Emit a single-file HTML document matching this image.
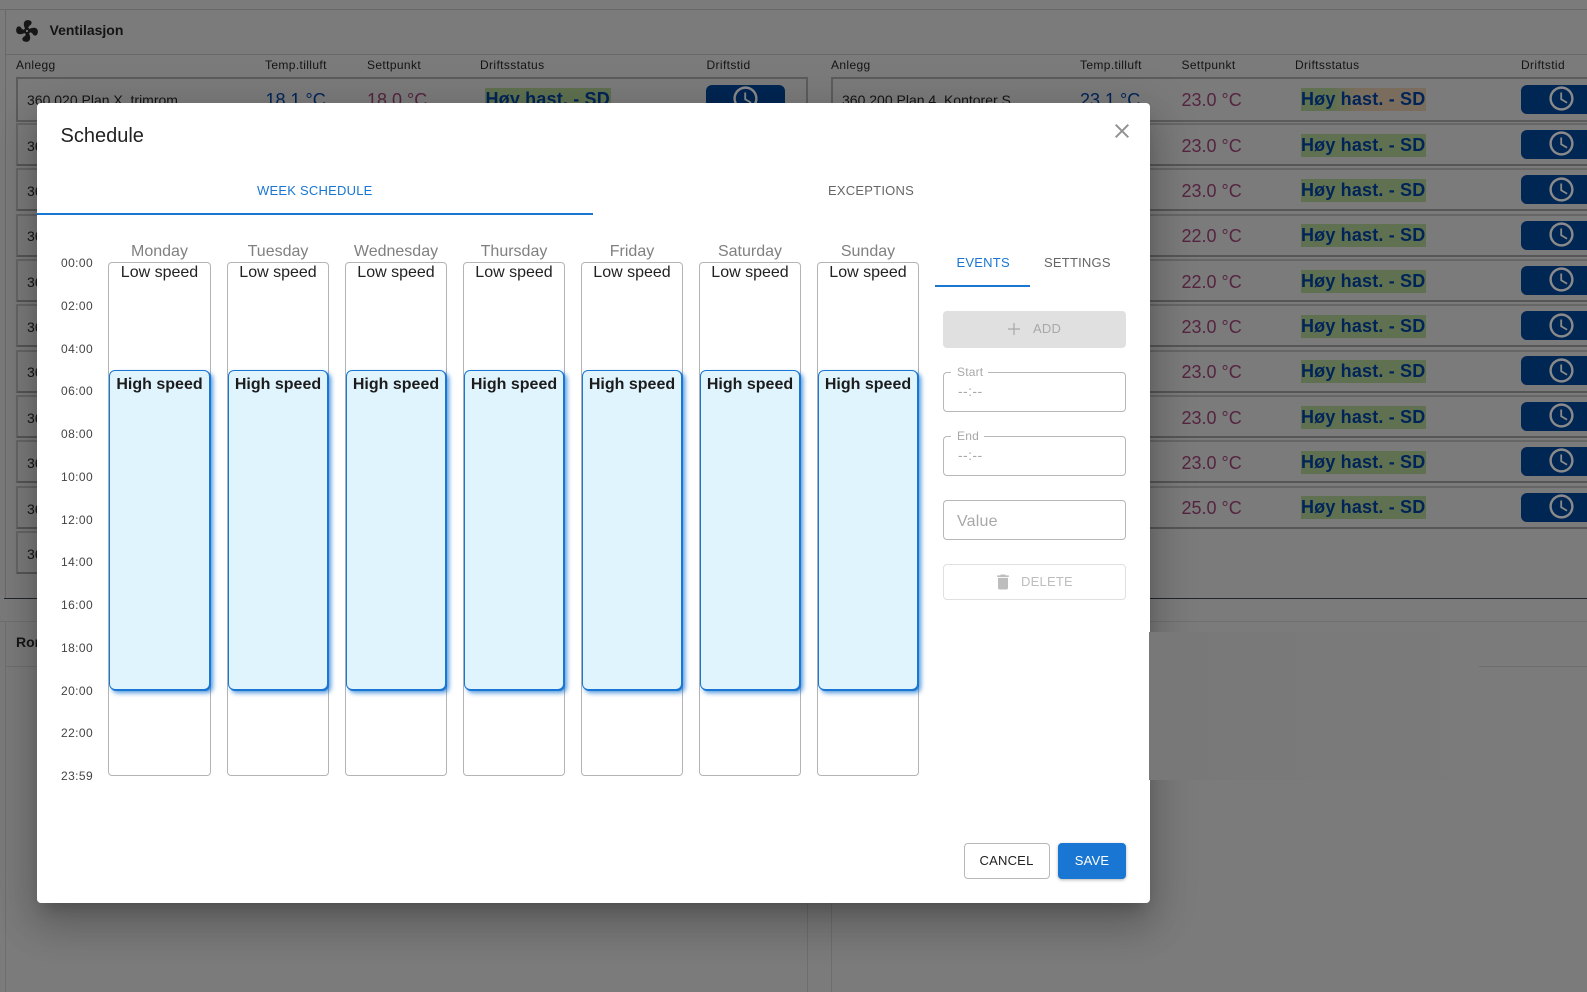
<!DOCTYPE html>
<html><head><meta charset="utf-8"><style>
html,body{margin:0;padding:0;width:1587px;height:992px;overflow:hidden;background:#7b7b7b}
body{position:relative;font-family:"Liberation Sans",sans-serif}
div,span,svg{position:absolute;box-sizing:border-box}
.t{white-space:nowrap;line-height:20px;height:20px}
.ln{background:#696969}
.h{font-size:12px;color:#141414;top:55px;letter-spacing:.37px}
.row{height:43px;border:2px solid #666;border-bottom-color:#565656;background:#7b7b7b}
.nm{font-size:14px;color:#141414}
.tb{font-size:18px;color:#002458}
.tr{font-size:18px;color:#552540}
.bd{height:23px;width:125.5px;background:#5f7150;font-size:18px;font-weight:bold;color:#002458;line-height:23px;white-space:nowrap;letter-spacing:.17px;padding-left:.5px}
.bn{height:29px;background:#002653;border-radius:6px}
.dlg{left:37px;top:103px;width:1113px;height:800px;background:#fff;border-radius:4px;box-shadow:0 11px 15px -7px rgba(0,0,0,.2),0 24px 38px 3px rgba(0,0,0,.14),0 9px 46px 8px rgba(0,0,0,.12)}
.dn{font-size:16px;color:#808080;top:242px;width:102px;text-align:center}
.col{top:262px;width:102px;height:514px;border:1px solid #b4b4b4;border-radius:4px;background:#fff}
.lo{font-size:16px;color:#222;top:263px;width:102px;text-align:center}
.ev{top:370px;width:100px;height:320px;background:#e0f4fe;border:1px solid #1976d2;border-radius:6px;box-shadow:1px 1px 0 #1976d2,3px 3px 5px rgba(25,118,210,.75)}
.hi{font-size:16px;font-weight:bold;color:#1c1c1c;top:375px;width:102px;text-align:center}
.tm{font-size:12px;color:#444;left:61px;letter-spacing:.4px}
.inp{left:943px;width:183px;height:40px;border:1px solid #b8b8b8;border-radius:4px;background:#fff}
.lb{font-size:12px;color:#a8a8a8;left:951px;background:#fff;padding:0 5px 0 6px;line-height:14px;height:14px;letter-spacing:.2px}
.ph{font-size:14px;color:#a8a8a8;left:958px;letter-spacing:.4px}
.up{font-size:13px;letter-spacing:.22px}
</style></head><body>

<div class="ln" style="left:0;top:9px;width:1587px;height:1px"></div>
<div class="ln" style="left:5px;top:10px;width:1px;height:588px"></div>
<div class="ln" style="left:5px;top:54px;width:1582px;height:1px"></div>
<svg style="left:14px;top:18px" width="26" height="26" viewBox="0 0 24 24"><path fill="#161616" d="M12,11A1,1 0 0,0 11,12A1,1 0 0,0 12,13A1,1 0 0,0 13,12A1,1 0 0,0 12,11M12.5,2C17,2 17.11,5.57 14.75,6.75C13.76,7.24 13.32,8.29 13.13,9.22C13.61,9.42 14.03,9.73 14.35,10.13C18.05,8.13 22.03,8.92 22.03,12.5C22.03,17 18.46,17.1 17.28,14.73C16.78,13.74 15.72,13.3 14.79,13.11C14.59,13.59 14.28,14 13.88,14.34C15.87,18.03 15.08,22 11.5,22C7,22 6.91,18.42 9.27,17.24C10.25,16.75 10.69,15.71 10.89,14.79C10.4,14.59 9.97,14.27 9.65,13.87C5.96,15.85 2,15.07 2,11.5C2,7 5.56,6.89 6.74,9.26C7.24,10.25 8.29,10.68 9.22,10.87C9.41,10.39 9.73,9.97 10.14,9.65C8.15,5.96 8.94,2 12.5,2Z"/></svg>
<div class="t" style="left:49.500px;top:20px;font-size:14px;font-weight:bold;color:#141414">Ventilasjon</div>

<div class="t h" style="left:16px">Anlegg</div>
<div class="t h" style="left:265px">Temp.tilluft</div>
<div class="t h" style="left:367px">Settpunkt</div>
<div class="t h" style="left:480px">Driftsstatus</div>
<div class="t h" style="left:706.5px">Driftstid</div>
<div class="t h" style="left:831px">Anlegg</div>
<div class="t h" style="left:1080px">Temp.tilluft</div>
<div class="t h" style="left:1181.5px">Settpunkt</div>
<div class="t h" style="left:1295px">Driftsstatus</div>
<div class="t h" style="left:1521px">Driftstid</div>

<!-- left rows -->
<div class="row" style="left:16px;top:77px;width:792px;height:45px;border-color:#5c5c5c"></div>
<div class="row" style="left:16px;top:123px;width:100px"></div>
<div class="row" style="left:16px;top:168px;width:100px"></div>
<div class="row" style="left:16px;top:214px;width:100px"></div>
<div class="row" style="left:16px;top:259px;width:100px"></div>
<div class="row" style="left:16px;top:304px;width:100px"></div>
<div class="row" style="left:16px;top:350px;width:100px"></div>
<div class="row" style="left:16px;top:395px;width:100px"></div>
<div class="row" style="left:16px;top:440px;width:100px"></div>
<div class="row" style="left:16px;top:486px;width:100px"></div>
<div class="row" style="left:16px;top:531px;width:100px"></div>
<div class="t nm" style="left:27px;top:90px">360 020 Plan X, trimrom</div>
<div class="t nm" style="left:27px;top:136px">360</div>
<div class="t nm" style="left:27px;top:181px">360</div>
<div class="t nm" style="left:27px;top:226px">360</div>
<div class="t nm" style="left:27px;top:272px">360</div>
<div class="t nm" style="left:27px;top:317px">360</div>
<div class="t nm" style="left:27px;top:362px">360</div>
<div class="t nm" style="left:27px;top:408px">360</div>
<div class="t nm" style="left:27px;top:453px">360</div>
<div class="t nm" style="left:27px;top:499px">360</div>
<div class="t nm" style="left:27px;top:544px">360</div>
<div class="t tb" style="left:265.5px;top:90px">18.1 °C</div>
<div class="t tr" style="left:367px;top:90px">18.0 °C</div>
<div class="bd" style="left:485px;top:88px">Høy hast. - SD</div>
<div class="bn" style="left:705.5px;top:85px;width:79px"></div>
<svg style="left:731px;top:84px" width="29" height="29" viewBox="0 0 24 24"><path fill="#8a8a8a" d="M11.99 2C6.47 2 2 6.48 2 12s4.47 10 9.99 10C17.52 22 22 17.52 22 12S17.52 2 11.99 2zM12 20c-4.420 0-8-3.580-8-8s3.580-8 8-8 8 3.580 8 8-3.580 8-8 8zm.5-13H11v6l5.250 3.150.75-1.230-4.500-2.670z"/></svg>

<!-- right rows -->
<div class="row" style="left:831px;top:77px;width:770px;height:45px;border-color:#5c5c5c"></div>
<div class="row" style="left:831px;top:123px;width:770px"></div>
<div class="row" style="left:831px;top:168px;width:770px"></div>
<div class="row" style="left:831px;top:214px;width:770px"></div>
<div class="row" style="left:831px;top:259px;width:770px"></div>
<div class="row" style="left:831px;top:304px;width:770px"></div>
<div class="row" style="left:831px;top:350px;width:770px"></div>
<div class="row" style="left:831px;top:395px;width:770px"></div>
<div class="row" style="left:831px;top:440px;width:770px"></div>
<div class="row" style="left:831px;top:486px;width:770px"></div>
<div class="t nm" style="left:842px;top:90px">360 200 Plan 4, Kontorer S</div>
<div class="t tb" style="left:1080px;top:90px">23.1 °C</div>

<div class="t tr" style="left:1181.5px;top:90px">23.0 °C</div>
<div class="t tr" style="left:1181.5px;top:136px">23.0 °C</div>
<div class="t tr" style="left:1181.5px;top:181px">23.0 °C</div>
<div class="t tr" style="left:1181.5px;top:226px">22.0 °C</div>
<div class="t tr" style="left:1181.5px;top:272px">22.0 °C</div>
<div class="t tr" style="left:1181.5px;top:317px">23.0 °C</div>
<div class="t tr" style="left:1181.5px;top:362px">23.0 °C</div>
<div class="t tr" style="left:1181.5px;top:408px">23.0 °C</div>
<div class="t tr" style="left:1181.5px;top:453px">23.0 °C</div>
<div class="t tr" style="left:1181.5px;top:498px">25.0 °C</div>

<div class="bd" style="left:1300.5px;top:88px;background:linear-gradient(90deg,#5f7150 25%,#7a6d5e 45%)">Høy hast. - SD</div>
<div class="bd" style="left:1300.5px;top:134px">Høy hast. - SD</div>
<div class="bd" style="left:1300.5px;top:179px">Høy hast. - SD</div>
<div class="bd" style="left:1300.5px;top:224px">Høy hast. - SD</div>
<div class="bd" style="left:1300.5px;top:270px">Høy hast. - SD</div>
<div class="bd" style="left:1300.5px;top:315px">Høy hast. - SD</div>
<div class="bd" style="left:1300.5px;top:360px">Høy hast. - SD</div>
<div class="bd" style="left:1300.5px;top:406px">Høy hast. - SD</div>
<div class="bd" style="left:1300.5px;top:451px">Høy hast. - SD</div>
<div class="bd" style="left:1300.5px;top:496px">Høy hast. - SD</div>

<div class="bn" style="left:1520.5px;top:85px;width:80px"></div>
<div class="bn" style="left:1520.5px;top:130px;width:80px"></div>
<div class="bn" style="left:1520.5px;top:175px;width:80px"></div>
<div class="bn" style="left:1520.5px;top:221px;width:80px"></div>
<div class="bn" style="left:1520.5px;top:266px;width:80px"></div>
<div class="bn" style="left:1520.5px;top:311px;width:80px"></div>
<div class="bn" style="left:1520.5px;top:356px;width:80px"></div>
<div class="bn" style="left:1520.5px;top:402px;width:80px"></div>
<div class="bn" style="left:1520.5px;top:447px;width:80px"></div>
<div class="bn" style="left:1520.5px;top:493px;width:80px"></div>

<svg style="left:1547px;top:84px" width="29" height="29" viewBox="0 0 24 24"><path fill="#8a8a8a" d="M11.99 2C6.47 2 2 6.48 2 12s4.47 10 9.99 10C17.52 22 22 17.52 22 12S17.52 2 11.99 2zM12 20c-4.420 0-8-3.580-8-8s3.580-8 8-8 8 3.580 8 8-3.580 8-8 8zm.5-13H11v6l5.250 3.150.75-1.230-4.500-2.670z"/></svg>
<svg style="left:1547px;top:129px" width="29" height="29" viewBox="0 0 24 24"><path fill="#8a8a8a" d="M11.99 2C6.47 2 2 6.48 2 12s4.47 10 9.99 10C17.52 22 22 17.52 22 12S17.52 2 11.99 2zM12 20c-4.420 0-8-3.580-8-8s3.580-8 8-8 8 3.580 8 8-3.580 8-8 8zm.5-13H11v6l5.250 3.150.75-1.230-4.500-2.670z"/></svg>
<svg style="left:1547px;top:175px" width="29" height="29" viewBox="0 0 24 24"><path fill="#8a8a8a" d="M11.99 2C6.47 2 2 6.48 2 12s4.47 10 9.99 10C17.52 22 22 17.52 22 12S17.52 2 11.99 2zM12 20c-4.420 0-8-3.580-8-8s3.580-8 8-8 8 3.580 8 8-3.580 8-8 8zm.5-13H11v6l5.250 3.150.75-1.230-4.500-2.670z"/></svg>
<svg style="left:1547px;top:220px" width="29" height="29" viewBox="0 0 24 24"><path fill="#8a8a8a" d="M11.99 2C6.47 2 2 6.48 2 12s4.47 10 9.99 10C17.52 22 22 17.52 22 12S17.52 2 11.99 2zM12 20c-4.420 0-8-3.580-8-8s3.580-8 8-8 8 3.580 8 8-3.580 8-8 8zm.5-13H11v6l5.250 3.150.75-1.230-4.500-2.670z"/></svg>
<svg style="left:1547px;top:265px" width="29" height="29" viewBox="0 0 24 24"><path fill="#8a8a8a" d="M11.99 2C6.47 2 2 6.48 2 12s4.47 10 9.99 10C17.52 22 22 17.52 22 12S17.52 2 11.99 2zM12 20c-4.420 0-8-3.580-8-8s3.580-8 8-8 8 3.580 8 8-3.580 8-8 8zm.5-13H11v6l5.250 3.150.75-1.230-4.500-2.670z"/></svg>
<svg style="left:1547px;top:311px" width="29" height="29" viewBox="0 0 24 24"><path fill="#8a8a8a" d="M11.99 2C6.47 2 2 6.48 2 12s4.47 10 9.99 10C17.52 22 22 17.52 22 12S17.52 2 11.99 2zM12 20c-4.420 0-8-3.580-8-8s3.580-8 8-8 8 3.580 8 8-3.580 8-8 8zm.5-13H11v6l5.250 3.150.75-1.230-4.500-2.670z"/></svg>
<svg style="left:1547px;top:356px" width="29" height="29" viewBox="0 0 24 24"><path fill="#8a8a8a" d="M11.99 2C6.47 2 2 6.48 2 12s4.47 10 9.99 10C17.52 22 22 17.52 22 12S17.52 2 11.99 2zM12 20c-4.420 0-8-3.580-8-8s3.580-8 8-8 8 3.580 8 8-3.580 8-8 8zm.5-13H11v6l5.250 3.150.75-1.230-4.500-2.670z"/></svg>
<svg style="left:1547px;top:401px" width="29" height="29" viewBox="0 0 24 24"><path fill="#8a8a8a" d="M11.99 2C6.47 2 2 6.48 2 12s4.47 10 9.99 10C17.52 22 22 17.52 22 12S17.52 2 11.99 2zM12 20c-4.420 0-8-3.580-8-8s3.580-8 8-8 8 3.580 8 8-3.580 8-8 8zm.5-13H11v6l5.250 3.150.75-1.230-4.500-2.670z"/></svg>
<svg style="left:1547px;top:446px" width="29" height="29" viewBox="0 0 24 24"><path fill="#8a8a8a" d="M11.99 2C6.47 2 2 6.48 2 12s4.47 10 9.99 10C17.52 22 22 17.52 22 12S17.52 2 11.99 2zM12 20c-4.420 0-8-3.580-8-8s3.580-8 8-8 8 3.580 8 8-3.580 8-8 8zm.5-13H11v6l5.250 3.150.75-1.230-4.500-2.670z"/></svg>
<svg style="left:1547px;top:492px" width="29" height="29" viewBox="0 0 24 24"><path fill="#8a8a8a" d="M11.99 2C6.47 2 2 6.48 2 12s4.47 10 9.99 10C17.52 22 22 17.52 22 12S17.52 2 11.99 2zM12 20c-4.420 0-8-3.580-8-8s3.580-8 8-8 8 3.580 8 8-3.580 8-8 8zm.5-13H11v6l5.250 3.150.75-1.230-4.500-2.670z"/></svg>

<!-- lower section -->
<div style="left:4px;top:598px;width:1583px;height:1px;background:#20242c"></div>
<div class="ln" style="left:0;top:621px;width:1587px;height:1px;background:#707070"></div>
<div class="ln" style="left:5px;top:622px;width:1px;height:370px;background:#6e6e6e"></div>
<div class="ln" style="left:5px;top:666px;width:1587px;height:1px;background:#6e6e6e"></div>
<div class="ln" style="left:807px;top:880px;width:1px;height:112px;background:#6e6e6e"></div>
<div class="ln" style="left:831px;top:880px;width:1px;height:112px;background:#6e6e6e"></div>
<div class="t" style="left:16px;top:632px;font-size:14px;font-weight:bold;color:#161616">Rom</div>

<!-- dialog -->
<div class="dlg"></div>
<div class="t" style="left:60.5px;top:126px;font-size:20px;color:#222">Schedule</div>
<svg style="left:1110px;top:119px" width="24" height="24" viewBox="0 0 24 24"><path fill="#929292" d="M19 6.410 17.590 5 12 10.590 6.410 5 5 6.410 10.590 12 5 17.590 6.410 19 12 13.410 17.590 19 19 17.590 13.410 12z"/></svg>

<div class="t up" style="left:257px;top:180.5px;color:#1976d2">WEEK SCHEDULE</div>
<div class="t up" style="left:828px;top:180.5px;color:#666">EXCEPTIONS</div>
<div style="left:37px;top:213px;width:556px;height:2px;background:#1976d2"></div>

<div class="t tm" style="top:253px">00:00</div>
<div class="t tm" style="top:296px">02:00</div>
<div class="t tm" style="top:339px">04:00</div>
<div class="t tm" style="top:381px">06:00</div>
<div class="t tm" style="top:424px">08:00</div>
<div class="t tm" style="top:467px">10:00</div>
<div class="t tm" style="top:510px">12:00</div>
<div class="t tm" style="top:552px">14:00</div>
<div class="t tm" style="top:595px">16:00</div>
<div class="t tm" style="top:638px">18:00</div>
<div class="t tm" style="top:681px">20:00</div>
<div class="t tm" style="top:723px">22:00</div>
<div class="t tm" style="top:766px">23:59</div>

<div class="t dn" style="left:108.5px">Monday</div>
<div class="t dn" style="left:227px">Tuesday</div>
<div class="t dn" style="left:345px">Wednesday</div>
<div class="t dn" style="left:463px">Thursday</div>
<div class="t dn" style="left:581px">Friday</div>
<div class="t dn" style="left:699px">Saturday</div>
<div class="t dn" style="left:817px">Sunday</div>

<div class="col" style="left:108px;width:103px"></div>
<div class="col" style="left:227px"></div>
<div class="col" style="left:345px"></div>
<div class="col" style="left:463px"></div>
<div class="col" style="left:581px"></div>
<div class="col" style="left:699px"></div>
<div class="col" style="left:817px"></div>

<div class="t lo" style="left:108.5px">Low speed</div>
<div class="t lo" style="left:227px">Low speed</div>
<div class="t lo" style="left:345px">Low speed</div>
<div class="t lo" style="left:463px">Low speed</div>
<div class="t lo" style="left:581px">Low speed</div>
<div class="t lo" style="left:699px">Low speed</div>
<div class="t lo" style="left:817px">Low speed</div>

<div class="ev" style="left:109px;width:101px"></div>
<div class="ev" style="left:228px"></div>
<div class="ev" style="left:346px"></div>
<div class="ev" style="left:464px"></div>
<div class="ev" style="left:582px"></div>
<div class="ev" style="left:700px"></div>
<div class="ev" style="left:818px"></div>

<div class="t hi" style="left:108.5px">High speed</div>
<div class="t hi" style="left:227px">High speed</div>
<div class="t hi" style="left:345px">High speed</div>
<div class="t hi" style="left:463px">High speed</div>
<div class="t hi" style="left:581px">High speed</div>
<div class="t hi" style="left:699px">High speed</div>
<div class="t hi" style="left:817px">High speed</div>

<div class="t up" style="left:956.5px;top:252.5px;color:#1976d2">EVENTS</div>
<div class="t up" style="left:1044px;top:252.5px;color:#666">SETTINGS</div>
<div style="left:935px;top:285px;width:95px;height:2px;background:#1976d2"></div>

<div style="left:943px;top:311px;width:183px;height:37px;background:#e0e0e0;border-radius:4px"></div>
<svg style="left:1007px;top:322px" width="14" height="14" viewBox="0 0 14 14"><path stroke="#a8a8a8" stroke-width="1.2" fill="none" d="M7 1v12M1 7h12"/></svg>
<div class="t up" style="left:1033px;top:318.5px;color:#a8a8a8">ADD</div>

<div class="inp" style="top:372px"></div>
<div class="t lb" style="top:365px">Start</div>
<div class="t ph" style="top:381px">--:--</div>
<div class="inp" style="top:436px"></div>
<div class="t lb" style="top:429px">End</div>
<div class="t ph" style="top:445px">--:--</div>
<div class="inp" style="top:500px"></div>
<div class="t" style="left:957px;top:512px;font-size:16px;color:#a8a8a8;letter-spacing:.2px">Value</div>

<div style="left:943px;top:564px;width:183px;height:36px;border:1px solid #e0e0e0;border-radius:4px"></div>
<svg style="left:993px;top:572px" width="20" height="20" viewBox="0 0 24 24"><path fill="#bdbdbd" d="M6 19c0 1.100.9 2 2 2h8c1.100 0 2-.9 2-2V7H6v12zM19 4h-3.500l-1-1h-5l-1 1H5v2h14V4z"/></svg>
<div class="t up" style="left:1021px;top:572px;color:#bdbdbd">DELETE</div>

<div style="left:963.500px;top:843px;width:86px;height:36px;border:1px solid #b8b8b8;border-radius:4px;background:#fff"></div>
<div class="t up" style="left:963.500px;top:851px;width:86px;text-align:center;color:#222">CANCEL</div>
<div style="left:1058px;top:843px;width:68px;height:36px;background:#1976d2;border-radius:4px;box-shadow:0 1px 3px rgba(0,0,0,.3)"></div>
<div class="t up" style="left:1058px;top:851px;width:68px;text-align:center;color:#fff">SAVE</div>

<!-- flat repaint region right of dialog -->
<div style="left:1149px;top:632px;width:340px;height:148px;background:linear-gradient(90deg,#787878,#7b7b7b)"></div>
<div class="ln" style="left:1479px;top:666px;width:108px;height:1px;background:#6e6e6e"></div>
</body></html>
